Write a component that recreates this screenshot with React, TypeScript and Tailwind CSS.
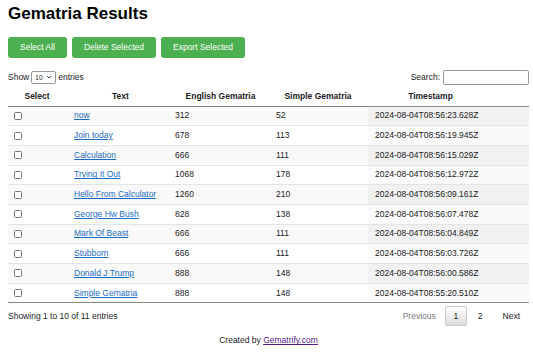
const rows = [
  { text: 'now', english: 312, simple: 52, time: '2024-08-04T08:56:23.628Z' },
  { text: 'Join today', english: 678, simple: 113, time: '2024-08-04T08:56:19.945Z' },
  { text: 'Calculation', english: 666, simple: 111, time: '2024-08-04T08:56:15.029Z' },
  { text: 'Trying It Out', english: 1068, simple: 178, time: '2024-08-04T08:56:12.972Z' },
  { text: 'Hello From Calculator', english: 1260, simple: 210, time: '2024-08-04T08:56:09.161Z' },
  { text: 'George Hw Bush', english: 828, simple: 138, time: '2024-08-04T08:56:07.478Z' },
  { text: 'Mark Of Beast', english: 666, simple: 111, time: '2024-08-04T08:56:04.849Z' },
  { text: 'Stubborn', english: 666, simple: 111, time: '2024-08-04T08:56:03.726Z' },
  { text: 'Donald J Trump', english: 888, simple: 148, time: '2024-08-04T08:56:00.586Z' },
  { text: 'Simple Gematria', english: 888, simple: 148, time: '2024-08-04T08:55:20.510Z' },
]

const actions = ['Select All', 'Delete Selected', 'Export Selected']

export default function App() {
  return (
    <div className="min-h-[354px] bg-white pl-[8px] pr-[4px] text-[8.5px] leading-[11px] text-[#222] font-['Liberation_Sans',Arial,sans-serif]">
      <h1 className="pt-[4px] text-[17px] leading-[19px] font-bold text-black">Gematria Results</h1>

      <div className="mt-[14px] flex gap-[5px]">
        {actions.map((label) => (
          <button
            key={label}
            className="h-[21px] rounded-[3px] bg-[#4caf50] px-[12px] text-[8.5px] text-white"
          >
            {label}
          </button>
        ))}
      </div>

      <div className="mt-[11px] flex h-[16px] items-center justify-between">
        <div className="flex items-center">
          <span>Show</span>
          <div className="mx-[2px] flex h-[13px] w-[25px] items-center justify-between rounded-[2px] border border-[#999] bg-white pl-[3px] pr-[3px] text-[6.5px]">
            <span>10</span>
            <svg width="6" height="4" viewBox="0 0 6 4" fill="none">
              <path d="M1 1l2 2 2-2" stroke="#333" strokeWidth="0.9" />
            </svg>
          </div>
          <span>entries</span>
        </div>
        <div className="flex items-center">
          <span>Search:</span>
          <div className="ml-[3px] h-[15px] w-[86px] rounded-[2px] border border-[#999] bg-white" />
        </div>
      </div>

      <table className="mt-[2px] w-full table-fixed border-collapse">
        <colgroup>
          <col className="w-[58px]" />
          <col className="w-[101px]" />
          <col className="w-[101px]" />
          <col className="w-[100px]" />
          <col />
        </colgroup>
        <thead>
          <tr className="h-[19px] border-b border-[#888]">
            <th className="px-0 text-center font-bold">Select</th>
            <th className="pl-[8px] text-center font-bold">Text</th>
            <th className="pl-[6px] text-center font-bold">English Gematria</th>
            <th className="text-center font-bold">Simple Gematria</th>
            <th className="pr-[36px] text-center font-bold">Timestamp</th>
          </tr>
        </thead>
        <tbody>
          {rows.map((row, i) => {
            const odd = i % 2 === 0
            return (
              <tr
                key={row.time}
                className={`h-[19.7px] border-t border-[#e4e4e4] first:border-t-0 ${odd ? 'bg-[#f9f9f9]' : 'bg-white'}`}
              >
                <td className="pl-[6px]">
                  <div className="h-[8px] w-[8px] rounded-[1.5px] border border-[#777] bg-white" />
                </td>
                <td className="pl-[8px]">
                  <a href="#" className="text-[#1a6cc6] underline">
                    {row.text}
                  </a>
                </td>
                <td className="pl-[8px]">{row.english}</td>
                <td className="pl-[8px]">{row.simple}</td>
                <td className={`pl-[7px] ${odd ? 'bg-[#f1f1f1]' : 'bg-[#fafafa]'}`}>{row.time}</td>
              </tr>
            )
          })}
        </tbody>
        <tfoot>
          <tr className="border-t border-[#888]">
            <td colSpan={5} className="p-0" />
          </tr>
        </tfoot>
      </table>

      <div className="mt-[3px] flex h-[20px] items-center justify-between">
        <span>Showing 1 to 10 of 11 entries</span>
        <div className="flex items-center">
          <span className="px-[9px] text-[#777]">Previous</span>
          <span className="flex h-[20px] w-[22px] items-center justify-center rounded-[2px] border border-[#c8c8c8] bg-gradient-to-b from-white to-[#dcdcdc]">
            1
          </span>
          <span className="px-[11px]">2</span>
          <span className="px-[9px]">Next</span>
        </div>
      </div>

      <p className="mt-[9px] text-center">
        Created by{' '}
        <a href="#" className="text-[#551a8b] underline">
          Gematrify.com
        </a>
      </p>
    </div>
  )
}
